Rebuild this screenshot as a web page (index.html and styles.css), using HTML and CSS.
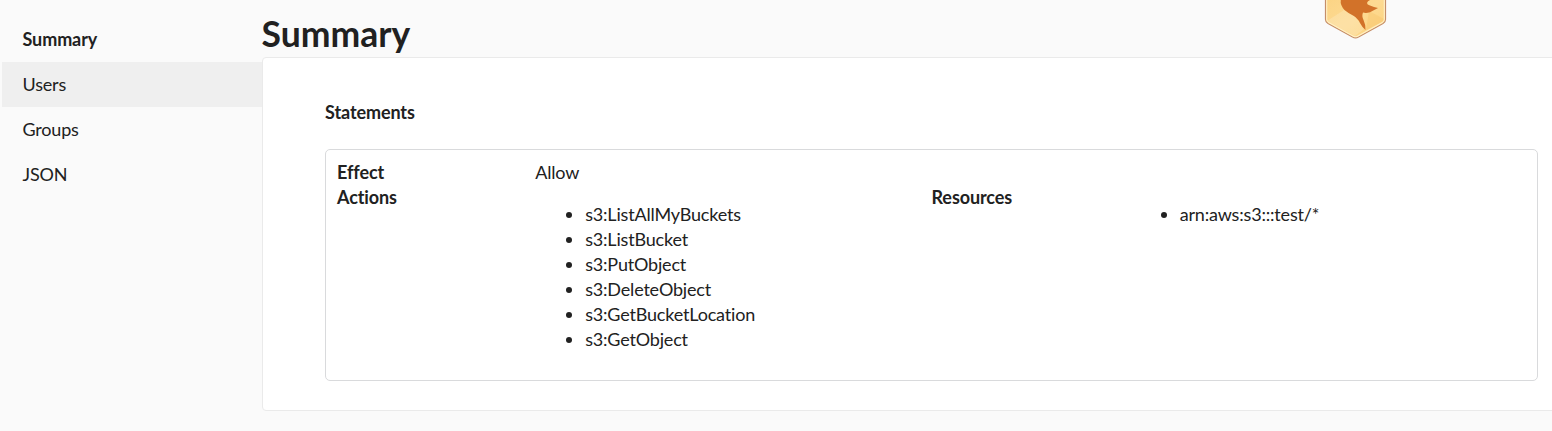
FILE: index.html
```
<!DOCTYPE html>
<html lang="en">
<head>
    <meta charset="UTF-8">
    <title>Policy Summary</title>
    <link rel="stylesheet" href="styles.css">
</head>
<body>
    <div class="policy-page">
        <ul class="side-menu">
            <li class="menu-item active">Summary</li>
            <li class="menu-item hovered">Users</li>
            <li class="menu-item">Groups</li>
            <li class="menu-item">JSON</li>
        </ul>
        <div class="content">
            <h1>Summary</h1>
            <div class="panel">
                <div class="panel-title">Statements</div>
                <div class="statement">
                    <div class="label">Effect</div>
                    <div class="value wide">Allow</div>
                    <div class="label">Actions</div>
                    <div class="value">
                        <ul>
                            <li>s3:ListAllMyBuckets</li>
                            <li>s3:ListBucket</li>
                            <li>s3:PutObject</li>
                            <li>s3:DeleteObject</li>
                            <li>s3:GetBucketLocation</li>
                            <li>s3:GetObject</li>
                        </ul>
                    </div>
                    <div class="label">Resources</div>
                    <div class="value">
                        <ul>
                            <li>arn:aws:s3:::test/*</li>
                        </ul>
                    </div>
                </div>
            </div>
        </div>
    </div>
    <svg class="badge" width="64" height="40" viewBox="0 0 64 40">
        <defs>
            <linearGradient id="gold" x1="0" y1="0" x2="1" y2="1">
                <stop offset="0" stop-color="#fbd383"/>
                <stop offset="0.5" stop-color="#fdda92"/>
                <stop offset="1" stop-color="#fcd27c"/>
            </linearGradient>
        </defs>
        <path d="M1.500 -4V19.500Q1.500 22 4 23.500L28.500 37Q31.500 38.800 34.500 37L59 23.500Q61.500 22 61.500 19.500V-4Z" fill="url(#gold)" stroke="#c58e69" stroke-width="1.200"/>
        <path d="M3 21L20 10L31 16L40 29L31 36L5 22Z" fill="#fff" opacity=".18"/>
        <path d="M45 11L60 19Q60 21 58 22L42 30Z" fill="#f5bd60" opacity=".3"/>
        <path d="M2.700 -4V19.300Q2.700 21.500 4.700 22.600L29 36Q31.500 37.500 34 36L58.300 22.600Q60.300 21.500 60.300 19.300V-4" fill="none" stroke="#fff0c5" stroke-width="1.100"/>
        <path d="M16.800 0Q16 5 20.500 10Q24 13 29 15.500Q34 18.500 36 23Q38 27 41.500 30Q41.500 24 39.500 20Q37.500 16 39 12.500Q42 13.500 46 12.200L54 8Q50 7 46 5.500Q43 4.500 43 3Q43.500 1 46 0Z" fill="#d27229"/>
    </svg>
</body>
</html>
```
FILE: styles.css
```
* {
    box-sizing: border-box;
}
body {
    margin: 0;
    height: 431px;
    overflow: hidden;
    background: #fafafa;
    color: #212121;
    font-family: Lato, sans-serif;
    font-size: 18px;
    font-variant-ligatures: none;
    letter-spacing: -0.18px;
    line-height: 25px;
}
.policy-page {
    display: flex;
}
.side-menu {
    width: 262px;
    margin: 0;
    padding: 17px 0 0 2px;
    list-style: none;
}
.menu-item {
    height: 45px;
    padding: 10px 20.5px;
}
.menu-item.active {
    font-weight: bold;
    letter-spacing: -0.1px;
}
.menu-item.hovered {
    background: #efefef;
}
.content {
    flex: 1;
    min-width: 0;
}
h1 {
    margin: 0;
    padding-top: 10px;
    height: 57px;
    font-size: 35.5px;
    line-height: 47px;
    letter-spacing: 0;
    text-indent: -0.5px;
}
/* the panel runs off the right edge of the window */
.panel {
    width: 1302px;
    height: 354px;
    padding: 42px 25px 29px 62px;
    background: #fff;
    border: 1px solid #eaeaea;
    border-radius: 4px;
}
.panel-title {
    margin-bottom: 24px;
    font-weight: bold;
    letter-spacing: -0.1px;
}
.statement {
    display: grid;
    grid-template-columns: repeat(2, 1fr 2fr);
    align-content: start;
    width: 1213px;
    height: 232px;
    padding: 10px 11px;
    border: 1px solid #d9dadc;
    border-radius: 5px;
}
.label {
    font-weight: bold;
    letter-spacing: -0.1px;
}
.wide {
    grid-column: span 3;
}
.value ul {
    margin: 17px 0;
    padding-left: 50px;
}
/* badge hanging over the top edge of the page */
.badge {
    position: absolute;
    top: 0;
    left: 1324px;
}
```
